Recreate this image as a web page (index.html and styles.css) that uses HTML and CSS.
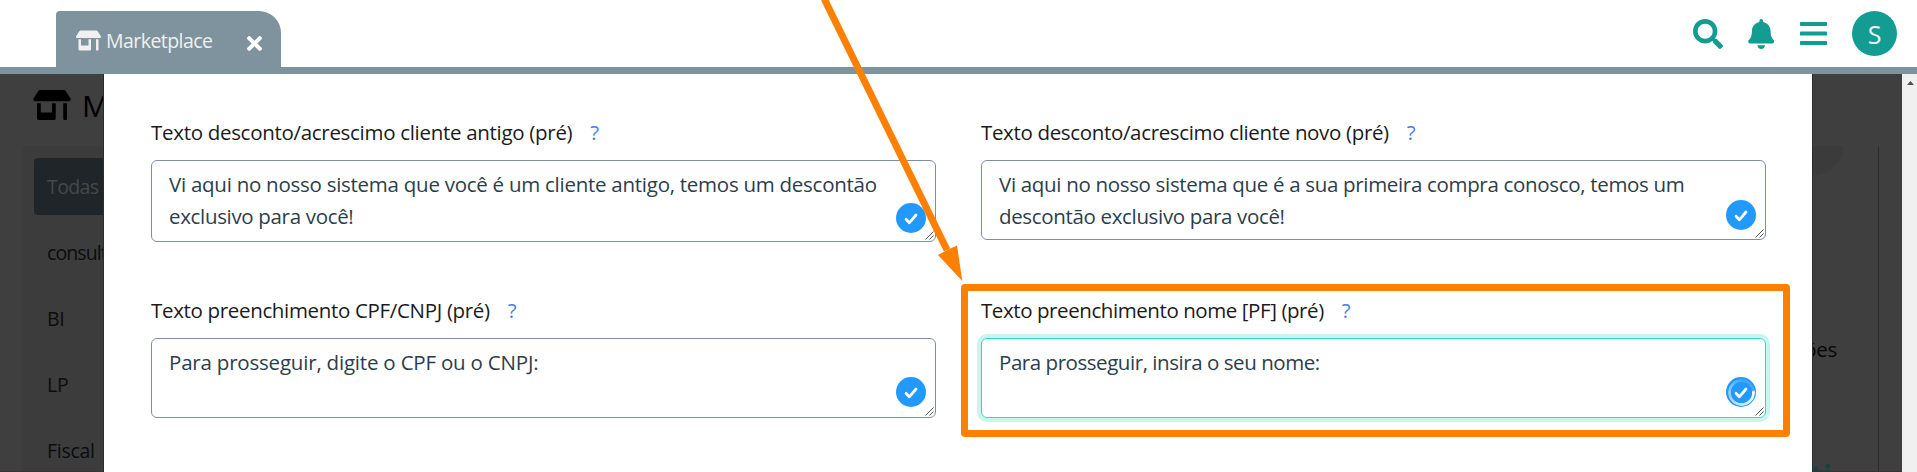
FILE: index.html
```html
<!DOCTYPE html>
<html lang="pt-BR">
<head>
<meta charset="utf-8">
<title>Marketplace</title>
<link rel="stylesheet" href="styles.css">
</head>
<body>
<svg class="defs" width="0" height="0" aria-hidden="true">
  <symbol id="store" viewBox="0 0 640 512"><path d="M320 384H128V224H64v256c0 17.7 14.3 32 32 32h256c17.7 0 32-14.3 32-32V224h-64v160zm314.6-241.8l-85.3-128c-6-8.9-16-14.2-26.7-14.2H117.4c-10.7 0-20.7 5.3-26.6 14.2l-85.3 128c-14.2 21.3 1 49.8 26.6 49.8H608c25.5 0 40.7-28.5 26.6-49.8zM512 496c0 8.8 7.2 16 16 16h32c8.8 0 16-7.2 16-16V224h-64v272z"/></symbol>
  <symbol id="grip" viewBox="0 0 9 9"><path d="M.5 8.5l8-8M4.500 8.500l4-4" stroke="#555" stroke-width="1" fill="none"/></symbol>
  <symbol id="tick" viewBox="0 0 14 12"><path d="M2 6.300l3.300 3.500L12 2" fill="none" stroke="#fff" stroke-width="2.700" stroke-linecap="round" stroke-linejoin="round"/></symbol>
</svg>

<header class="topbar">
  <div class="tab">
    <svg class="tab-icon"><use href="#store"/></svg>
    <span class="tab-name">Marketplace</span>
    <svg class="tab-close" viewBox="0 80 352 352"><path d="M242.720 256l100.070-100.070c12.280-12.280 12.280-32.190 0-44.480l-22.240-22.240c-12.280-12.280-32.190-12.280-44.480 0L176 189.280 75.930 89.210c-12.280-12.280-32.190-12.280-44.480 0L9.210 111.450c-12.280 12.280-12.280 32.190 0 44.480L109.280 256 9.210 356.070c-12.280 12.280-12.280 32.190 0 44.480l22.240 22.240c12.280 12.280 32.200 12.280 44.480 0L176 322.720l100.070 100.070c12.280 12.280 32.200 12.280 44.480 0l22.240-22.240c12.280-12.280 12.280-32.190 0-44.480L242.720 256z"/></svg>
  </div>
  <nav class="actions">
    <svg class="i-search" viewBox="0 0 512 512"><path d="M505 442.700L405.300 343c-4.500-4.500-10.600-7-17-7H372c27.600-35.300 44-79.700 44-128C416 93.100 322.900 0 208 0S0 93.100 0 208s93.100 208 208 208c48.300 0 92.700-16.400 128-44v16.300c0 6.400 2.500 12.500 7 17l99.700 99.700c9.400 9.400 24.600 9.400 33.900 0l28.300-28.300c9.400-9.400 9.400-24.600.1-34zM208 336c-70.700 0-128-57.200-128-128 0-70.700 57.200-128 128-128 70.700 0 128 57.200 128 128 0 70.700-57.200 128-128 128z"/></svg>
    <svg class="i-bell" viewBox="0 0 448 512"><path d="M224 512c35.320 0 63.970-28.650 63.970-64H160.030c0 35.350 28.650 64 63.970 64zm215.390-149.710c-19.320-20.760-55.470-51.990-55.470-154.290 0-77.700-54.480-139.900-127.940-155.160V32c0-17.670-14.320-32-31.980-32s-31.980 14.330-31.980 32v20.840C118.560 68.100 64.080 130.300 64.080 208c0 102.300-36.150 133.530-55.470 154.290-6 6.450-8.660 14.160-8.610 21.710.11 16.400 12.980 32 32.100 32h383.800c19.120 0 32-15.600 32.100-32 .05-7.550-2.610-15.270-8.610-21.710z"/></svg>
    <svg class="i-bars" viewBox="0 0 27 23"><rect width="27" height="4" rx=".7"/><rect y="9.500" width="27" height="4" rx=".7"/><rect y="19" width="27" height="4" rx=".7"/></svg>
    <span class="avatar">S</span>
  </nav>
</header>

<main class="stage">
  <div class="page">
    <div class="page-title"><svg class="title-icon"><use href="#store"/></svg><span>M</span></div>
    <div class="columns">
      <ul class="menu">
        <li class="current">Todas</li>
        <li class="tight">consult</li>
        <li>BI</li>
        <li>LP</li>
        <li>Fiscal</li>
      </ul>
      <section class="catalog">
        <span class="bubble"></span>
        <span class="cut">ões</span>
        <span class="cut-title">ti</span>
      </section>
    </div>
  </div>
  <div class="scrollbar"></div>

  <form class="modal">
    <div class="field">
      <label class="w1">Texto desconto/acrescimo cliente antigo (pré)</label><a class="help">?</a>
      <div class="area tall"><span class="t1">Vi aqui no nosso sistema que você é um cliente antigo, temos um descontão</span><br><span class="t1b">exclusivo para você!</span>
        <i class="ok ok-a"><svg><use href="#tick"/></svg></i><svg class="grip"><use href="#grip"/></svg></div>
    </div>
    <div class="field">
      <label class="w2">Texto desconto/acrescimo cliente novo (pré)</label><a class="help">?</a>
      <div class="area"><span class="t2">Vi aqui no nosso sistema que é a sua primeira compra conosco, temos um</span><br><span class="t2b">descontão exclusivo para você!</span>
        <i class="ok ok-b"><svg><use href="#tick"/></svg></i><svg class="grip"><use href="#grip"/></svg></div>
    </div>
    <div class="field">
      <label class="w3">Texto preenchimento CPF/CNPJ (pré)</label><a class="help">?</a>
      <div class="area"><span class="t3">Para prosseguir, digite o CPF ou o CNPJ:</span>
        <i class="ok"><svg><use href="#tick"/></svg></i><svg class="grip"><use href="#grip"/></svg></div>
    </div>
    <div class="field">
      <label class="w4">Texto preenchimento nome [PF] (pré)</label><a class="help">?</a>
      <div class="area focus"><span class="t4">Para prosseguir, insira o seu nome:</span>
        <i class="ok busy"><svg><use href="#tick"/></svg></i><svg class="grip"><use href="#grip"/></svg></div>
    </div>
  </form>
</main>

<div class="highlight"></div>
<svg class="arrow" viewBox="0 0 1917 472"><path d="M824.300-1L947 250" stroke="#ff8000" stroke-width="7"/><path d="M938 255l6.500-3.500 6-3 6.500-3L962.300 281z" fill="#ff8000"/></svg>
</body>
</html>
```
FILE: styles.css
```css
* { box-sizing: border-box; }
html { overflow: hidden; }
body {
  margin: 0;
  width: 1917px;
  height: 472px;
  overflow: hidden;
  position: relative;
  display: flex;
  flex-direction: column;
  background: #fff;
  font: 20.500px/32px "Open Sans", "Noto Sans", sans-serif;
}
svg { display: block; }
.defs { position: absolute; }
.topbar {
  height: 74px;
  flex: none;
  display: flex;
  justify-content: space-between;
  padding: 11px 20px 0 56px;
  border-bottom: 7px solid #7e939e;
}
.tab {
  width: 225px;
  height: 56px;
  display: flex;
  align-items: flex-start;
  padding: 19px 19px 0 20px;
  border-radius: 4px 22px 0 0;
  background: #7e939e;
  color: #f0f0f0;
  fill: #f0f0f0;
}
.tab-icon { width: 25px; height: 21px; }
.tab-name { margin: -4px auto 0 5px; line-height: 30px; font-size: 19.500px; letter-spacing: -.55px; }
.tab-close { width: 15px; height: 15px; margin-top: 6px; fill: #fff; }
.actions { display: flex; align-items: flex-start; fill: #129c92; }
.i-search { width: 30px; height: 30px; margin: 8px 24.5px 0 0; }
.i-bell { width: 26.500px; height: 30px; margin: 8px 26px 0 0; }
.i-bars { width: 27px; height: 23px; margin: 11px 25px 0 0; }
.avatar {
  width: 45px;
  height: 45px;
  border-radius: 50%;
  background: #129c92;
  color: #f0f0f0;
  font-size: 25px;
  line-height: 47px;
  text-align: center;
}
.stage { flex: 1; min-height: 0; display: flex; position: relative; }
.page {
  flex: 1;
  display: flex;
  flex-direction: column;
  background: #3f3f3f;
  border-bottom: 1px solid #3a3435;
  color: #0b0b0b;
  overflow: hidden;
}
.page-title { height: 72px; flex: none; display: flex; padding: 16px 0 0 33px; font-size: 30px; color: #000; }
.title-icon { width: 38px; height: 30px; margin-right: 11px; }
.columns { flex: 1; display: flex; justify-content: space-between; padding-left: 22px; min-height: 0; }
.menu { width: 300px; margin: 0; padding: 12px 12px 0; list-style: none; background: #3c3c3c; font-size: 19.500px; }
.menu li { height: 57px; margin-bottom: 9px; padding: 0 13px; line-height: 58px; letter-spacing: -.3px; color: #0a0d0f; }
.menu li:last-child { height: 49px; margin: 0; padding-top: 9px; line-height: 40px; }
.menu .current { border-radius: 4px; background: #1f2528; color: #484848; letter-spacing: -.6px; }
.menu .tight { letter-spacing: -.9px; }
.catalog {
  width: 90px;
  margin-right: 23px;
  display: flex;
  flex-direction: column;
  border-right: 1px solid #2c2c2c;
}
.bubble { width: 54px; height: 29px; flex: none; border-radius: 0 0 30px 0; background: #3b3b3b; }
.cut { margin: 158px 41px 0 0; text-align: right; font-size: 20.500px; letter-spacing: -.3px; color: #060606; }
.cut-title { height: 11px; overflow: hidden; margin: 95px 46px 0 0; text-align: right; font-size: 30px; font-weight: 700; color: #0b4744; }
.scrollbar { width: 15px; background: #f0f0f0; padding: 7px 0 0 5px; }
.scrollbar::before { content: ""; display: block; width: 7px; height: 4px; background: #505050; clip-path: polygon(50% 0, 100% 100%, 0 100%); }
.modal {
  position: absolute;
  inset: 0 105px 0 104px;
  display: grid;
  grid-template-columns: 785px 785px;
  grid-template-rows: 178px 178px;
  column-gap: 45px;
  padding: 42px 0 0 47px;
  background: #fff;
  box-shadow: 0 0 0 1px #2c2c2c;
  clip-path: inset(0 -1px);
}
.field { display: grid; grid-template: 44px auto / max-content 1fr; column-gap: 18px; }
label, .help { color: #1b1b1b; white-space: nowrap; }
.help { color: #4a7ee0; }
.area {
  grid-column: 1 / 3;
  position: relative;
  height: 80px;
  padding: 7px 17px;
  border: 1px solid #7e8da8;
  border-radius: 6px;
  color: #2c3e4b;
  white-space: nowrap;
}
.w1 { letter-spacing: -.3px; }
.w2 { letter-spacing: -.34px; }
.w3 { letter-spacing: -.33px; }
.w4 { letter-spacing: -.42px; }
.t1 { letter-spacing: -.26px; }
.t1b { letter-spacing: -.33px; }
.t2 { letter-spacing: -.32px; }
.t2b { letter-spacing: -.34px; }
.t3 { letter-spacing: -.2px; }
.t4 { letter-spacing: -.45px; }
.area.tall { height: 82px; }
.area.focus { border-color: #2ed9cd; box-shadow: 0 0 0 4px #c9f5f0; }
.ok {
  position: absolute;
  right: 9px;
  top: 38px;
  width: 30px;
  height: 30px;
  display: grid;
  place-items: center;
  border-radius: 50%;
  background: #2299ff;
}
.ok-a { top: 42px; }
.ok-b { top: 39px; }
.ok svg { width: 14px; height: 12px; margin-top: 2px; }
.busy::before {
  content: "";
  position: absolute;
  inset: 1.500px;
  border-radius: 50%;
  background: conic-gradient(rgba(255,255,255,.15) 0 22%, #fff 24%, rgba(255,255,255,.75) 50%, rgba(255,255,255,.5) 75%, rgba(255,255,255,.15));
  -webkit-mask: radial-gradient(circle, transparent 10.300px, #000 11px);
  mask: radial-gradient(circle, transparent 10.300px, #000 11px);
}
.grip { position: absolute; right: 1px; bottom: 1px; width: 9px; height: 9px; }
.highlight {
  position: absolute;
  left: 961px;
  top: 284px;
  width: 829px;
  height: 153px;
  border: 7px solid #ff8000;
  border-radius: 4px;
}
.arrow { position: absolute; left: 0; top: 0; width: 1917px; height: 472px; }
```
